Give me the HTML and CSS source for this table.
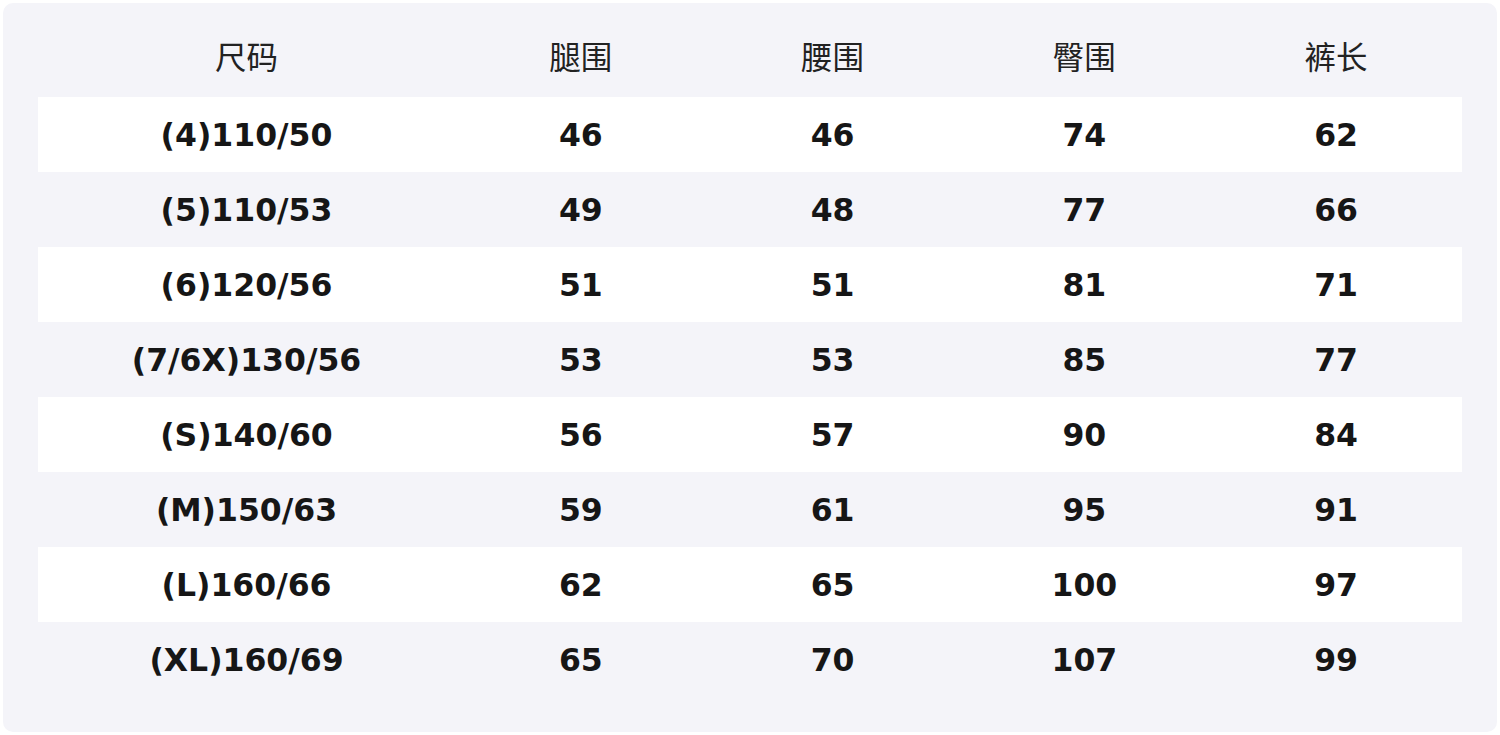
FILE: index.html
```html
<!DOCTYPE html>
<html lang="zh">
<head>
<meta charset="utf-8">
<link rel="stylesheet" href="styles.css">
</head>
<body>
<div class="card">
  <table class="size-table">
    <thead>
      <tr><th>尺码</th><th>腿围</th><th>腰围</th><th>臀围</th><th>裤长</th></tr>
    </thead>
    <tbody>
      <tr><td>(4)110/50</td><td>46</td><td>46</td><td>74</td><td>62</td></tr>
      <tr><td>(5)110/53</td><td>49</td><td>48</td><td>77</td><td>66</td></tr>
      <tr><td>(6)120/56</td><td>51</td><td>51</td><td>81</td><td>71</td></tr>
      <tr><td>(7/6X)130/56</td><td>53</td><td>53</td><td>85</td><td>77</td></tr>
      <tr><td>(S)140/60</td><td>56</td><td>57</td><td>90</td><td>84</td></tr>
      <tr><td>(M)150/63</td><td>59</td><td>61</td><td>95</td><td>91</td></tr>
      <tr><td>(L)160/66</td><td>62</td><td>65</td><td>100</td><td>97</td></tr>
      <tr><td>(XL)160/69</td><td>65</td><td>70</td><td>107</td><td>99</td></tr>
    </tbody>
  </table>
</div>
</body>
</html>
```
FILE: styles.css
```css
html, body {
  margin: 0;
  padding: 0;
  background: #ffffff;
}
.card {
  margin: 3px;
  height: 729px;
  box-sizing: border-box;
  padding: 19px 35px 0 35px;
  background: #f4f4f9;
  border-radius: 10px;
}
.size-table {
  width: 100%;
  border-collapse: collapse;
  table-layout: fixed;
}
.size-table th,
.size-table td {
  text-align: center;
  padding: 0;
}
.size-table th {
  font-family: "Noto Sans CJK SC", "Noto Sans", sans-serif;
  font-weight: 400;
  font-size: 31.5px;
  line-height: 67px;
  padding-bottom: 8px;
  color: #222222;
}
.size-table th:first-child {
  width: 417px;
}
.size-table td {
  height: 75px;
  font-family: "DejaVu Sans", sans-serif;
  font-weight: 700;
  font-size: 31.5px;
  color: #161616;
}
.size-table tbody tr:nth-child(odd) {
  background: #ffffff;
}
```
